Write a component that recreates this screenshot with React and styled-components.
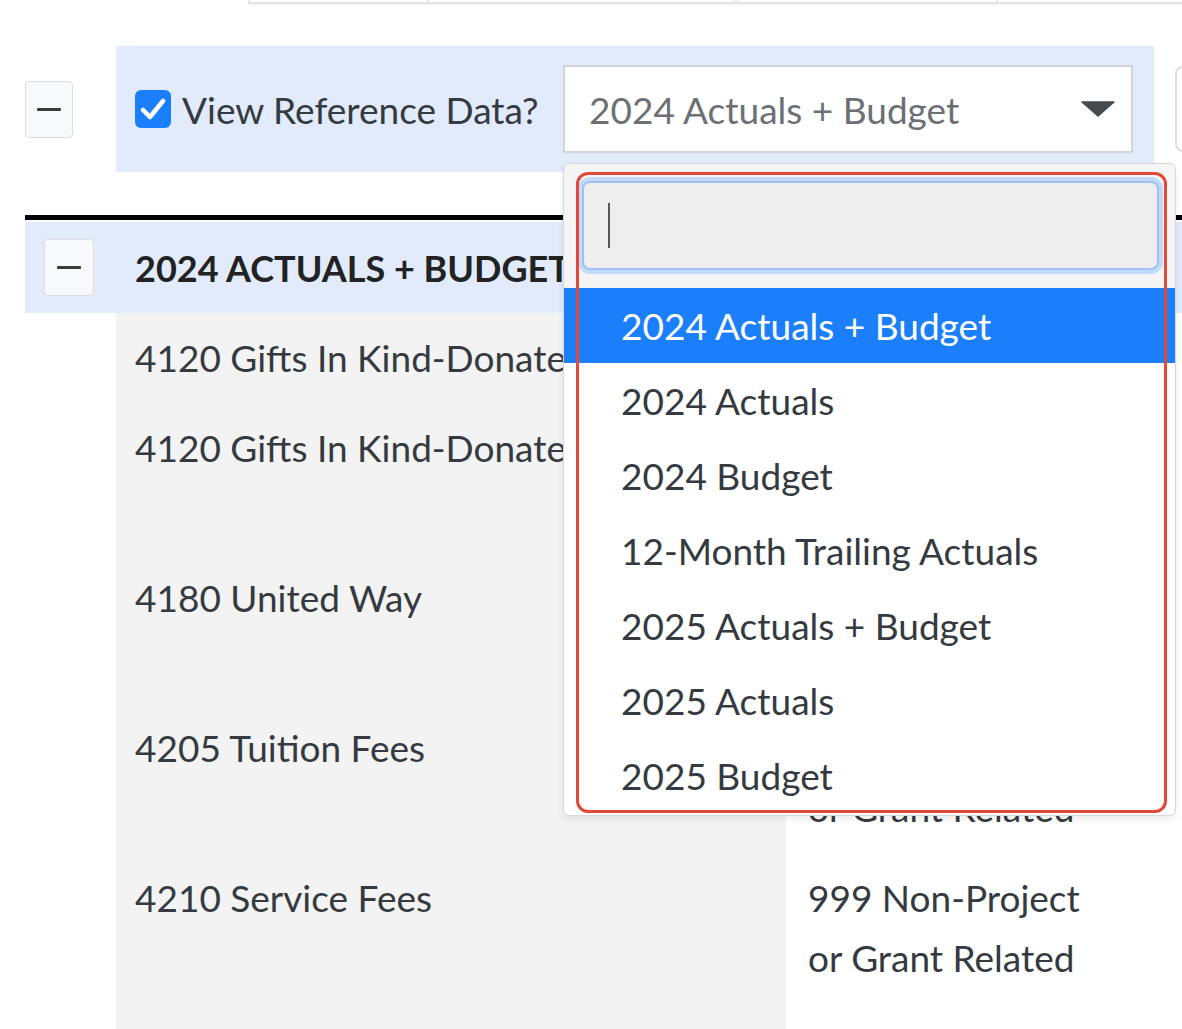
import React from 'react';
import styled, { createGlobalStyle } from 'styled-components';

const FONT = `Lato, "Open Sans", "Liberation Sans", sans-serif`;

const colors = {
  text: '#343a40',
  muted: '#6b7075',
  band: '#e1ebfb',
  rowGrey: '#f3f3f3',
  blue: '#1b7ffb',
  annotation: '#e2493a'
};

const OPTIONS = [
  '2024 Actuals + Budget',
  '2024 Actuals',
  '2024 Budget',
  '12-Month Trailing Actuals',
  '2025 Actuals + Budget',
  '2025 Actuals',
  '2025 Budget'
];

const ROWS = [
  { account: '4120 Gifts In Kind-Donated Goods', project: '' },
  { account: '4120 Gifts In Kind-Donated Services', project: '999 Non-Project or Grant Related' },
  { account: '4180 United Way', project: '999 Non-Project or Grant Related' },
  { account: '4205 Tuition Fees', project: '999 Non-Project or Grant Related' },
  { account: '4210 Service Fees', project: '999 Non-Project or Grant Related' },
  { account: '', project: '' }
];

const GlobalStyle = createGlobalStyle`
  html, body {
    margin: 0;
    padding: 0;
    background: #fff;
    overflow: hidden;
  }
  body {
    font-family: ${FONT};
    color: ${colors.text};
  }
`;

const Page = styled.div`
  width: 1182px;
  height: 1029px;
  overflow: hidden;
`;

const TopStrip = styled.div`
  display: flex;
  margin-left: 248px;
  height: 2px;
  border-bottom: 2px solid #e3e4e6;
  box-shadow: 0 1px 2px rgba(0, 0, 0, 0.06);
`;

const StripCell = styled.div`
  flex: 0 0 ${(p) => p.$width}px;
  border-left: 2px solid #e3e4e6;
`;

const Toolbar = styled.div`
  display: flex;
  align-items: center;
  margin-top: 42px;
  padding-left: 25px;
`;

const CollapseButton = styled.div`
  flex: 0 0 auto;
  display: flex;
  align-items: center;
  justify-content: center;
  width: ${(p) => p.$width}px;
  height: 57px;
  box-sizing: border-box;
  background: #f8f9fa;
  border: 1.5px solid #dcdde0;
  border-radius: 4px;
`;

const MinusBar = styled.span`
  width: 24px;
  height: 3px;
  border-radius: 1px;
  background: #3a3d40;
`;

const FilterBand = styled.div`
  display: flex;
  align-items: center;
  width: 1038px;
  height: 126px;
  box-sizing: border-box;
  margin-left: 43px;
  padding: 0 21px 0 19px;
  background: ${colors.band};
  flex-shrink: 0;
`;

const CheckLabel = styled.label`
  display: flex;
  align-items: center;
  gap: 11px;
  font-size: 37px;
  color: ${colors.text};
  white-space: nowrap;
`;

const Checkbox = styled.span`
  display: flex;
  align-items: center;
  justify-content: center;
  width: 36px;
  height: 38px;
  border-radius: 6px;
  background: ${colors.blue};
`;

const SelectWrap = styled.div`
  position: relative;
  margin-left: auto;
`;

const SelectBox = styled.div`
  display: flex;
  align-items: center;
  justify-content: space-between;
  width: 570px;
  height: 88px;
  box-sizing: border-box;
  padding: 0 16px 0 24px;
  background: #fff;
  border: 2px solid #d2d3d5;
  font-size: 37px;
  color: ${colors.muted};
`;

const SideButton = styled.div`
  flex: 0 0 60px;
  height: 86px;
  margin-left: 21px;
  box-sizing: border-box;
  background: #fff;
  border: 2px solid #dcdde0;
  border-right: none;
  border-radius: 8px 0 0 8px;
`;

const Dropdown = styled.div`
  position: absolute;
  top: 98px;
  left: 0;
  z-index: 10;
  width: 613px;
  height: 653px;
  box-sizing: border-box;
  background: #fff;
  border: 1.5px solid #d8d8d8;
  border-radius: 6px;
  box-shadow: 0 3px 6px rgba(0, 0, 0, 0.08);
  overflow: hidden;
`;

const SearchArea = styled.div`
  padding: 17px 16px 18px 18px;
  background: #f5f5f5;
`;

const SearchField = styled.div`
  display: flex;
  align-items: center;
  height: 89px;
  box-sizing: border-box;
  padding-left: 24px;
  background: #eeeeee;
  border: 2px solid #9cc3f3;
  border-radius: 8px;
  box-shadow: 0 0 0 4px #c2daf8;
`;

const TextCaret = styled.span`
  width: 2px;
  height: 45px;
  background: #555;
`;

const OptionList = styled.ul`
  list-style: none;
  margin: 0;
  padding: 0;
`;

const Option = styled.li`
  display: flex;
  align-items: center;
  height: 75px;
  padding-left: 57px;
  font-size: 37px;
  color: ${(p) => (p.$active ? '#fff' : colors.text)};
  background: ${(p) => (p.$active ? colors.blue : 'transparent')};
`;

const Annotation = styled.div`
  position: absolute;
  top: 8px;
  left: 12px;
  width: 591px;
  height: 641px;
  box-sizing: border-box;
  border: 3.5px solid ${colors.annotation};
  border-radius: 12px;
  pointer-events: none;
`;

const Divider = styled.div`
  height: 5px;
  margin: 43px 0 0 25px;
  background: #000;
`;

const SectionHeader = styled.div`
  display: flex;
  align-items: center;
  gap: 41px;
  height: 91px;
  margin: 2px 0 0 25px;
  padding-left: 19px;
  background: ${colors.band};
`;

const SectionTitle = styled.div`
  font-size: 36px;
  font-weight: 700;
  color: #222;
  white-space: nowrap;
`;

const Table = styled.div`
  display: grid;
  grid-template-columns: 91px 670px 330px;
  margin-left: 25px;
`;

const Cell = styled.div`
  box-sizing: border-box;
  min-height: 90px;
  padding: 15px ${(p) => (p.$grey ? 19 : 22)}px;
  background: ${(p) => (p.$grey ? colors.rowGrey : '#fff')};
  font-size: 37px;
  line-height: 60px;
  color: ${colors.text};
  white-space: ${(p) => (p.$grey ? 'nowrap' : 'normal')};
  overflow: hidden;
`;

const Spacer = styled.div`
  background: #fff;
`;

const CheckIcon = () => (
  <svg width="26" height="24" viewBox="0 0 26 24">
    <path d="M3 13 L10 20 L23 4" fill="none" stroke="#fff" strokeWidth="4.5" strokeLinecap="round" strokeLinejoin="round" />
  </svg>
);

const CaretIcon = () => (
  <svg width="34" height="16" viewBox="0 0 34 16">
    <path d="M1 1 L33 1 L17 15 Z" fill="#454a4f" stroke="#454a4f" strokeWidth="1.5" strokeLinejoin="round" />
  </svg>
);

const App = () => (
  <Page>
    <GlobalStyle />
    <TopStrip>
      <StripCell $width={177} />
      <StripCell $width={306} />
      <StripCell $width={259} />
      <StripCell $width={200} />
    </TopStrip>

    <Toolbar>
      <CollapseButton $width={48}>
        <MinusBar />
      </CollapseButton>
      <FilterBand>
        <CheckLabel>
          <Checkbox>
            <CheckIcon />
          </Checkbox>
          View Reference Data?
        </CheckLabel>
        <SelectWrap>
          <SelectBox>
            2024 Actuals + Budget
            <CaretIcon />
          </SelectBox>
          <Dropdown>
            <SearchArea>
              <SearchField>
                <TextCaret />
              </SearchField>
            </SearchArea>
            <OptionList>
              {OPTIONS.map((option, i) => (
                <Option key={option} $active={i === 0}>
                  {option}
                </Option>
              ))}
            </OptionList>
            <Annotation />
          </Dropdown>
        </SelectWrap>
      </FilterBand>
      <SideButton />
    </Toolbar>

    <Divider />
    <SectionHeader>
      <CollapseButton $width={50}>
        <MinusBar />
      </CollapseButton>
      <SectionTitle>2024 ACTUALS + BUDGET</SectionTitle>
    </SectionHeader>

    <Table>
      {ROWS.map((row, i) => (
        <React.Fragment key={i}>
          <Spacer />
          <Cell $grey>{row.account}</Cell>
          <Cell>{row.project}</Cell>
        </React.Fragment>
      ))}
    </Table>
  </Page>
);

export default App;
